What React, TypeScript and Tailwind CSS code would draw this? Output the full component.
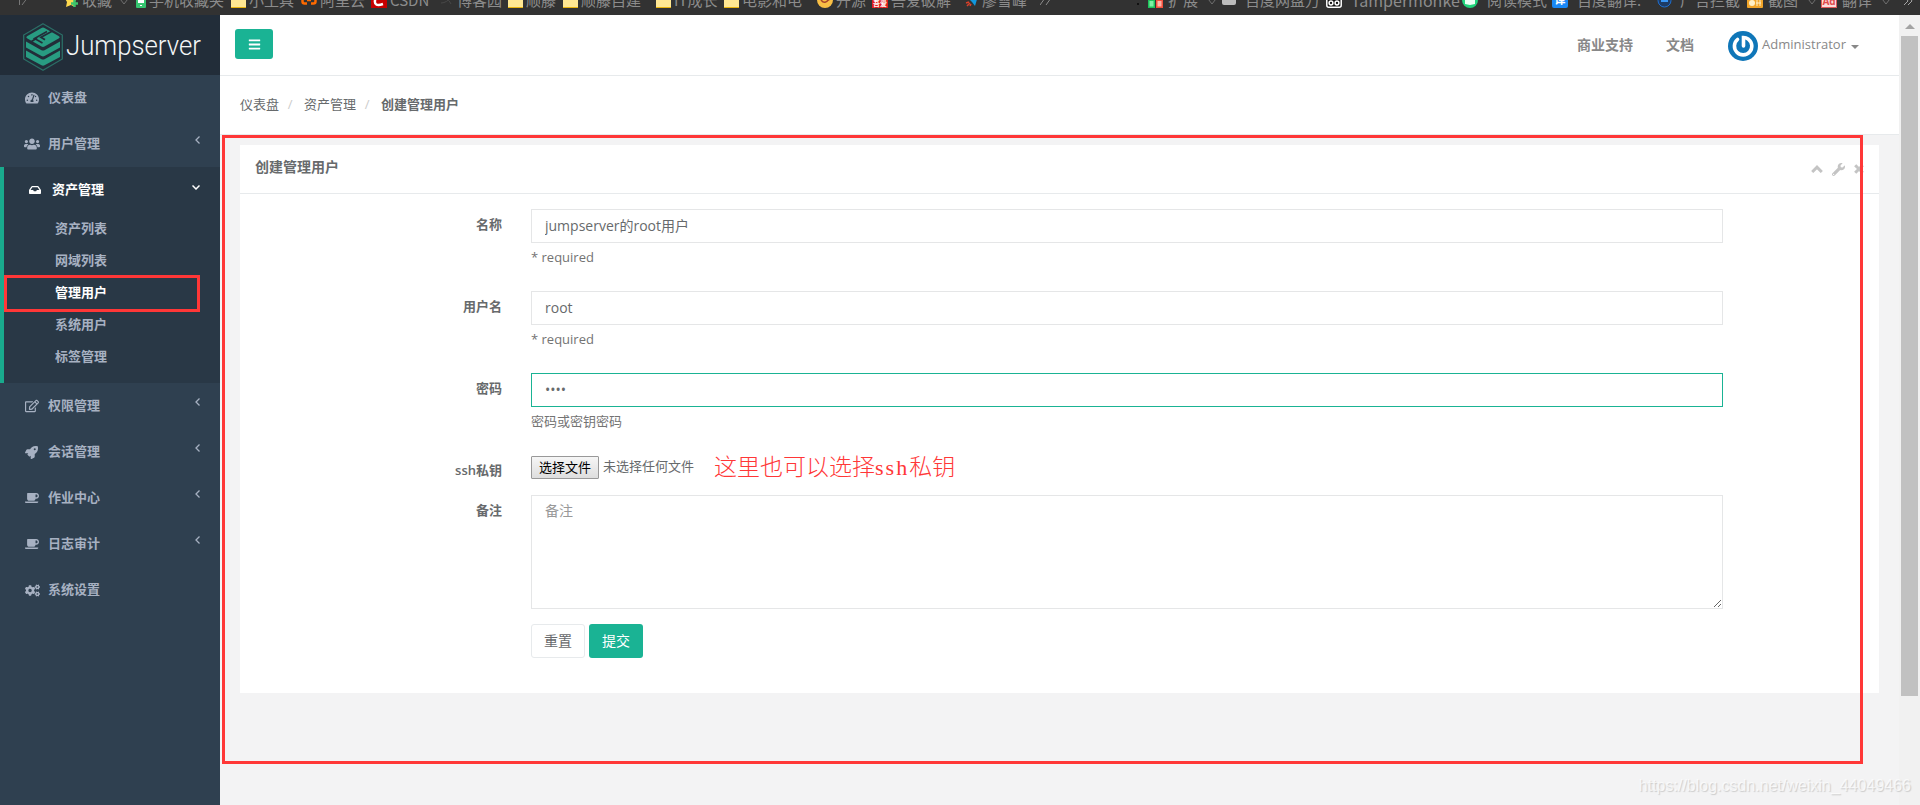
import type { ReactNode } from 'react';
import { FaBars, FaCoffee, FaCogs, FaInbox, FaRegEdit, FaRocket, FaTachometerAlt, FaUsers, FaWrench } from 'react-icons/fa';

interface Bookmark {
  icon: ReactNode;
  label: string;
  size: string;
  arrow?: boolean;
}

const folder = <span className="h-4 w-[15px] border-b border-[#e8b410] bg-[#ffe793]" />;

const bookmarks: Bookmark[] = [
  {
    icon: (
      <svg width="10" height="16" viewBox="0 0 10 16" fill="none" stroke="#777">
        <path d="M.5 0v13M9 5l-6 8" />
      </svg>
    ),
    label: '',
    size: 'w-[46px]',
  },
  {
    icon: (
      <svg width="14" height="16" viewBox="0 0 14 16">
        <path d="M6 0l2 5 5 1-4 4 1 5-4-2-5 2 1-5-3-5 5-1z" fill="#ffd94d" />
        <path d="M9.500 8v7M6 11.500h7" stroke="#3cc46c" strokeWidth="2.500" />
      </svg>
    ),
    label: '收藏',
    size: 'w-[71px]',
    arrow: true,
  },
  {
    icon: (
      <svg width="10" height="16" viewBox="0 0 10 16">
        <rect width="10" height="16" rx="1" fill="#35c46f" />
        <path d="M2 2h6v9H2zM4 13h2v1H4z" fill="#fff" />
      </svg>
    ),
    label: '手机收藏夹',
    size: 'w-[95px]',
  },
  { icon: folder, label: '小工具', size: 'w-[70px]' },
  {
    icon: (
      <svg width="16" height="14" viewBox="0 0 16 14" fill="none" stroke="#ff6a00" strokeWidth="2.500">
        <path d="M6 1.500H3.500q-2 0-2 2v5q0 2 2 2H6M10 1.500h2.500q2 0 2 2v5q0 2-2 2H10M6 7h4" />
      </svg>
    ),
    label: '阿里云',
    size: 'w-[70px]',
  },
  {
    icon: (
      <svg width="16" height="16" viewBox="0 0 16 16">
        <rect width="16" height="16" fill="#c70000" />
        <path d="M12 4.500Q5 2 4 8.500T12 12" fill="none" stroke="#fff" strokeWidth="2.500" />
      </svg>
    ),
    label: 'CSDN',
    size: 'w-[69px]',
  },
  {
    icon: (
      <svg width="14" height="12" viewBox="0 0 14 12" fill="none" stroke="#484848">
        <path d="M1 9q6 0 11-7M6 4q4 3 5 6" />
      </svg>
    ),
    label: '博客园',
    size: 'w-[68px]',
  },
  { icon: folder, label: '顺藤', size: 'w-[55px]' },
  { icon: folder, label: '顺藤自建', size: 'w-[93px]' },
  { icon: folder, label: 'IT成长', size: 'w-[68px]' },
  { icon: folder, label: '电影和电', size: 'w-[93px]' },
  {
    icon: (
      <svg width="16" height="16" viewBox="0 0 16 16">
        <circle cx="8" cy="8" r="8" fill="#f9bf45" />
        <path d="M4 8q4 5 8-1M10 9l3-2" fill="none" stroke="#a8432a" strokeWidth="1.500" />
      </svg>
    ),
    label: '开源',
    size: 'w-[55px]',
  },
  {
    icon: (
      <span className="h-4 w-4 overflow-hidden bg-[#e01e1e] pt-2 text-center text-[7px] leading-[7px] font-bold text-white">
        吾爱
      </span>
    ),
    label: '吾爱破解',
    size: 'w-[93px]',
  },
  {
    icon: (
      <svg width="14" height="16" viewBox="0 0 14 16">
        <path d="M3 6l10-2-3 10-3-4z" fill="#1197dd" />
        <path d="M1 11l3-1M2 14l3-3M5 14l1-2" stroke="#d8402a" strokeWidth="1.500" />
      </svg>
    ),
    label: '廖雪峰',
    size: 'w-[75px]',
  },
  {
    icon: (
      <svg width="11" height="14" viewBox="0 0 11 14" fill="none" stroke="#8c8c8c">
        <path d="M5 5l-5 7M11 5l-5 7" />
      </svg>
    ),
    label: '',
    size: 'w-[97px]',
  },
  {
    icon: (
      <svg width="3" height="14" viewBox="0 0 3 14" fill="#111">
        <path d="M0 5h2v2H0zM0 10h2v2H0z" />
      </svg>
    ),
    label: '',
    size: 'w-[11px]',
  },
  {
    icon: (
      <svg width="15" height="16" viewBox="0 0 15 16">
        <path d="M0 0h7v16H0z" fill="#1fc25b" />
        <path d="M8 0h7v16H8z" fill="#f4503c" />
        <path d="M1.500 9h4v5.500h-4z" fill="#7ff0a4" />
        <path d="M9.500 9h4v5.500h-4z" fill="#ffb3a7" />
      </svg>
    ),
    label: '扩展',
    size: 'w-[74px] gap-[5px]',
    arrow: true,
  },
  {
    icon: <span className="mb-[3px] h-[13px] w-[14px] rounded-xs bg-[#bcbcbc]" />,
    label: '百度网盘万',
    size: 'w-[104px] gap-[9px]',
  },
  {
    icon: (
      <svg width="16" height="16" viewBox="0 0 16 16" fill="none" stroke="#fff" strokeWidth="1.500">
        <rect x=".8" y=".8" width="14.400" height="14.400" rx="2" fill="#111" />
        <circle cx="5" cy="11" r="1.900" />
        <circle cx="11" cy="11" r="1.900" />
      </svg>
    ),
    label: 'Tampermonke',
    size: 'w-[136px] gap-[9px] text-[16px]',
  },
  {
    icon: (
      <svg width="16" height="16" viewBox="0 0 16 16">
        <circle cx="8" cy="8" r="8" fill="#1fd37a" />
        <path d="M3 5l5 1 5-1v7l-5 1-5-1z" fill="#e9fff3" />
      </svg>
    ),
    label: '阅读模式',
    size: 'w-[90px] gap-[9px]',
  },
  {
    icon: (
      <span className="h-4 w-4 rounded-xs bg-[#1a88f5] text-center text-[11px] leading-4 font-bold text-white">译</span>
    ),
    label: '百度翻译:',
    size: 'w-[105px] gap-[9px]',
  },
  {
    icon: (
      <svg width="15" height="15" viewBox="0 0 15 15">
        <circle cx="7.500" cy="7.500" r="6.500" fill="#1d3b66" stroke="#1f6fd0" />
        <path d="M4 8h7" stroke="#3a97f5" strokeWidth="2" />
      </svg>
    ),
    label: '广告拦截',
    size: 'w-[90px] gap-[8px]',
  },
  {
    icon: (
      <svg width="16" height="16" viewBox="0 0 16 16">
        <rect width="16" height="16" rx="1" fill="#f0a429" />
        <circle cx="5" cy="11" r="3" fill="#fff0c8" />
        <path d="M10 8v6M13 8v6M9 11h5" stroke="#fff0c8" />
      </svg>
    ),
    label: '截图',
    size: 'w-[74px] gap-[5px]',
    arrow: true,
  },
  {
    icon: (
      <span className="h-4 w-4 border border-[#e05a5a] bg-[#fbdcdc] text-center text-[10px] leading-4 font-bold text-[#e04c4c]">
        Ad
      </span>
    ),
    label: '翻译',
    size: 'w-[82px] gap-[5px]',
    arrow: true,
  },
  {
    icon: (
      <svg width="10" height="14" viewBox="0 0 10 14" fill="none" stroke="#a5a5a5">
        <path d="M3 5l2 3-4 4M7 5l2 3-4 4" />
      </svg>
    ),
    label: '',
    size: 'w-[12px]',
  },
];

// the bar is scrolled half out of view, only the lower part of each row shows
function BookmarkBar() {
  return (
    <div className="h-[15px] overflow-hidden bg-[#323232]">
      <div className="-mt-[15px] flex h-[30px] items-center pl-[19px] text-[15px] text-[#8c8c8c]">
        {bookmarks.map((item, i) => (
          <div key={i} className={`flex shrink-0 items-center gap-[3px] whitespace-nowrap ${item.size}`}>
            <span className="flex shrink-0">{item.icon}</span>
            {item.label && <span className="font-['Noto_Sans_CJK_SC',sans-serif]">{item.label}</span>}
            {item.arrow && (
              <svg className="mt-1 ml-[5px]" width="8" height="6" viewBox="0 0 8 6" fill="none" stroke="#707070">
                <path d="M.5.5h7L4 5z" />
              </svg>
            )}
          </div>
        ))}
      </div>
    </div>
  );
}

function Logo() {
  return (
    <div className="flex h-[60px] shrink-0 items-center bg-[#222d39] pt-[3px] pl-[23px]">
      <svg width="180" height="48" viewBox="0 0 180 48">
        <path d="M20 .8L39.300 12v24L20 47.200.700 36V12z" fill="none" stroke="#2b6e66" strokeWidth="1.300" />
        <g fill="#289c82">
          <path d="M18.500 5q1.500-.8 3 0L36 13.200q1.500 1 0 2L21.500 23.500q-1.500.8-3 0L4 15.200q-1.500-1 0-2z" />
          <path d="M3 18.500l15.500 8.700q1.500.8 3 0L37 18.500v6L21.500 33q-1.500.8-3 0L3 24.500z" />
          <path d="M3 27.500l15.500 8.700q1.500.8 3 0L37 27.500V34l-15.500 8.300q-1.500.8-3 0L3 34z" />
        </g>
        <path d="M29.500 8L18 14.300l4 2.400M8.500 18.500L14 15" fill="none" stroke="#222d39" strokeWidth="1.800" />
        <path d="M24 8.500L11.500 15.500l8 4.500" fill="none" stroke="#222d39" strokeWidth="1.600" />
        <text
          x="43"
          y="32"
          fill="#f4f6f7"
          fontFamily="Roboto, 'Open Sans', sans-serif"
          fontWeight="300"
          fontSize="27"
          textLength="135"
          lengthAdjust="spacingAndGlyphs"
        >
          Jumpserver
        </text>
      </svg>
    </div>
  );
}

interface MenuItemProps {
  icon: ReactNode;
  label: string;
  arrow?: boolean;
}

function MenuItem({ icon, label, arrow = true }: MenuItemProps) {
  return (
    <li className="flex h-[46px] items-center pr-5 pl-[25px]">
      <span className="w-[23px] text-[14px]">{icon}</span>
      <span>{label}</span>
      {arrow && (
        <svg className="mb-2 ml-auto" width="5" height="8" viewBox="0 0 5 8" fill="none" stroke="#a7b1c2" strokeWidth="1.300">
          <path d="M4.500.5L1 4l3.500 3.500" />
        </svg>
      )}
    </li>
  );
}

const assetLinks = ['资产列表', '网域列表', '管理用户', '系统用户', '标签管理'];

function Sidebar() {
  return (
    <aside className="flex w-[220px] shrink-0 flex-col bg-[#2f4050]">
      <Logo />
      <ul className="text-[13px] font-semibold text-[#a7b1c2]">
        <MenuItem icon={<FaTachometerAlt />} label="仪表盘" arrow={false} />
        <MenuItem icon={<FaUsers className="-ml-px text-[16px]" />} label="用户管理" />
        <li className="border-l-4 border-[#19aa8d] bg-[#293846] pb-[10px]">
          <div className="flex h-[46px] items-center pr-5 pl-[25px] text-white">
            <FaInbox className="mr-[11px] text-[12px]" />
            <span>资产管理</span>
            <svg className="mb-[5px] ml-auto" width="8" height="5" viewBox="0 0 8 5" fill="none" stroke="#fff" strokeWidth="1.500">
              <path d="M.5.5L4 4 7.500.5" />
            </svg>
          </div>
          <ul>
            {assetLinks.map((link) => (
              <li
                key={link}
                className={
                  link === '管理用户'
                    ? 'relative flex h-8 items-center pl-[51px] text-white'
                    : 'flex h-8 items-center pl-[51px]'
                }
              >
                {link}
                {link === '管理用户' && (
                  <span className="absolute -top-[2px] left-0 h-[37px] w-[196px] border-3 border-[#ff3737]" />
                )}
              </li>
            ))}
          </ul>
        </li>
        <MenuItem icon={<FaRegEdit />} label="权限管理" />
        <MenuItem icon={<FaRocket className="text-[13px]" />} label="会话管理" />
        <MenuItem icon={<FaCoffee />} label="作业中心" />
        <MenuItem icon={<FaCoffee />} label="日志审计" />
        <MenuItem icon={<FaCogs className="text-[15px]" />} label="系统设置" arrow={false} />
      </ul>
    </aside>
  );
}

function TopNav() {
  return (
    <header className="flex h-[61px] shrink-0 items-center border-b border-[#e7eaec] bg-white pr-[40px] pl-[15px] text-[#888]">
      <button className="mb-[2px] flex h-[30px] w-[38px] items-center justify-center rounded-[3px] bg-[#1ab394] text-white">
        <FaBars className="text-[13px]" />
      </button>
      <span className="ml-auto text-sm font-semibold">商业支持</span>
      <span className="ml-[33px] text-sm font-semibold">文档</span>
      <svg className="ml-[34px] mt-0.5" width="30" height="30" viewBox="0 0 30 30">
        <circle cx="15" cy="15" r="15" fill="#0f76b8" />
        <path
          d="M9.500 8.500a8.700 8.700 0 1 0 11-.2Q18 6.500 15.500 6.500V15"
          fill="none"
          stroke="#fff"
          strokeWidth="3.600"
          strokeLinecap="round"
        />
      </svg>
      <span className="ml-1 text-[13px]">Administrator</span>
      <span className="mt-[3px] ml-[5px] border-x-4 border-t-4 border-x-transparent border-t-[#888]" />
    </header>
  );
}

function Breadcrumb() {
  return (
    <nav className="flex h-[59px] shrink-0 items-center border-b border-[#e7eaec] bg-white pl-5 text-[13px] text-[#676a6c]">
      <span>仪表盘</span>
      <span className="w-[25px] pr-[3px] text-center text-[#ccc]">/</span>
      <span>资产管理</span>
      <span className="w-[25px] pr-[3px] text-center text-[#ccc]">/</span>
      <span className="font-semibold">创建管理用户</span>
    </nav>
  );
}

interface FieldProps {
  label: string;
  help?: string;
  size: string;
  children: ReactNode;
}

function Field({ label, help, size, children }: FieldProps) {
  return (
    <div className={`flex ${size}`}>
      <label className="mr-[29px] w-[262px] shrink-0 pt-[5px] text-right text-[13px] leading-5 font-semibold">
        {label}
      </label>
      <div className="w-[1192px]">
        {children}
        {help && <p className="mt-1 text-[13px] leading-5 text-[#737373]">{help}</p>}
      </div>
    </div>
  );
}

const inputClass = 'block h-[34px] w-full border bg-white pr-3 pb-[2px] pl-[13px] text-sm outline-none';

function AdminUserForm() {
  return (
    <form className="pt-[15px]">
      <Field label="名称" help="* required" size="h-[82px]">
        <input className={`${inputClass} border-[#e5e6e7]`} defaultValue="jumpserver的root用户" />
      </Field>
      <Field label="用户名" help="* required" size="h-[82px]">
        <input className={`${inputClass} border-[#e5e6e7]`} defaultValue="root" />
      </Field>
      <Field label="密码" help="密码或密钥密码" size="h-[82px]">
        <input type="password" className={`${inputClass} border-[#1ab394]`} defaultValue="root" />
      </Field>
      <Field label="ssh私钥" size="h-10">
        <div className="-mt-px flex items-center text-[13px]">
          <button
            type="button"
            className="h-[23px] w-[68px] rounded-[1px] border border-[#999] bg-linear-to-b from-[#f6f6f6] to-[#dedede] leading-5 text-black"
          >
            选择文件
          </button>
          <span className="ml-1">未选择任何文件</span>
          <span className="ml-5 pt-[2px] font-['Liberation_Serif','Noto_Sans_CJK_SC',serif] text-[23px] leading-6 font-light text-[#ff3737]">
            这里也可以选择<span className="text-[22px] tracking-[2px]">ssh</span>私钥
          </span>
        </div>
      </Field>
      <Field label="备注" size="h-[129px]">
        <textarea
          className="block h-[114px] w-full resize border border-[#e5e6e7] px-[13px] py-[5px] text-sm outline-none placeholder:text-[#999]"
          placeholder="备注"
        />
      </Field>
      <div className="ml-[291px] flex gap-1 text-sm">
        <button type="reset" className="h-[34px] w-[54px] rounded-[3px] border border-[#e7eaec] bg-white">
          重置
        </button>
        <button type="button" className="h-[34px] w-[54px] rounded-[3px] bg-[#1ab394] text-white">
          提交
        </button>
      </div>
    </form>
  );
}

function PanelTools() {
  return (
    <div className="ml-auto flex items-center gap-[9px] text-[13px] text-[#c4c4c4]">
      <svg width="12" height="8" viewBox="0 0 12 8" fill="none" stroke="currentColor" strokeWidth="3">
        <path d="M1.200 7L6 2.200 10.800 7" />
      </svg>
      <FaWrench />
      <svg width="10" height="10" viewBox="0 0 10 10" stroke="currentColor" strokeWidth="3">
        <path d="M1.200 1.200l7.600 7.600M8.800 1.200L1.200 8.800" />
      </svg>
    </div>
  );
}

function Scrollbar() {
  return (
    <div className="flex w-[21px] shrink-0 flex-col items-center bg-[#f1f1f1]">
      <span className="mt-[9px] border-x-[5px] border-b-[5px] border-x-transparent border-b-[#a3a3a3]" />
      <span className="mt-[7px] h-[660px] w-[17px] bg-[#c1c1c1]" />
    </div>
  );
}

export default function App() {
  return (
    <div className="relative flex h-[805px] w-[1920px] flex-col overflow-hidden bg-[#f3f3f4] font-['Open_Sans','Noto_Sans_CJK_SC',sans-serif] text-[#676a6c]">
      <BookmarkBar />
      <div className="flex min-h-0 flex-1">
        <Sidebar />
        <main className="flex min-w-0 flex-1 flex-col">
          <TopNav />
          <Breadcrumb />
          <section className="mx-5 mt-[10px] h-[548px] bg-white">
            <div className="flex h-[49px] items-center border-b border-[#e7eaec] px-[15px]">
              <h5 className="pb-[5px] text-sm font-semibold">创建管理用户</h5>
              <PanelTools />
            </div>
            <AdminUserForm />
          </section>
        </main>
        <Scrollbar />
      </div>
      <div className="pointer-events-none absolute top-[135px] left-[222px] h-[629px] w-[1641px] border-3 border-[#ff3737]" />
      <span className="absolute right-[9px] bottom-[7px] font-['Liberation_Sans',sans-serif] text-[16px] text-white/70 [text-shadow:1px_1px_1px_#ccc]">
        https://blog.csdn.net/weixin_44049466
      </span>
    </div>
  );
}
